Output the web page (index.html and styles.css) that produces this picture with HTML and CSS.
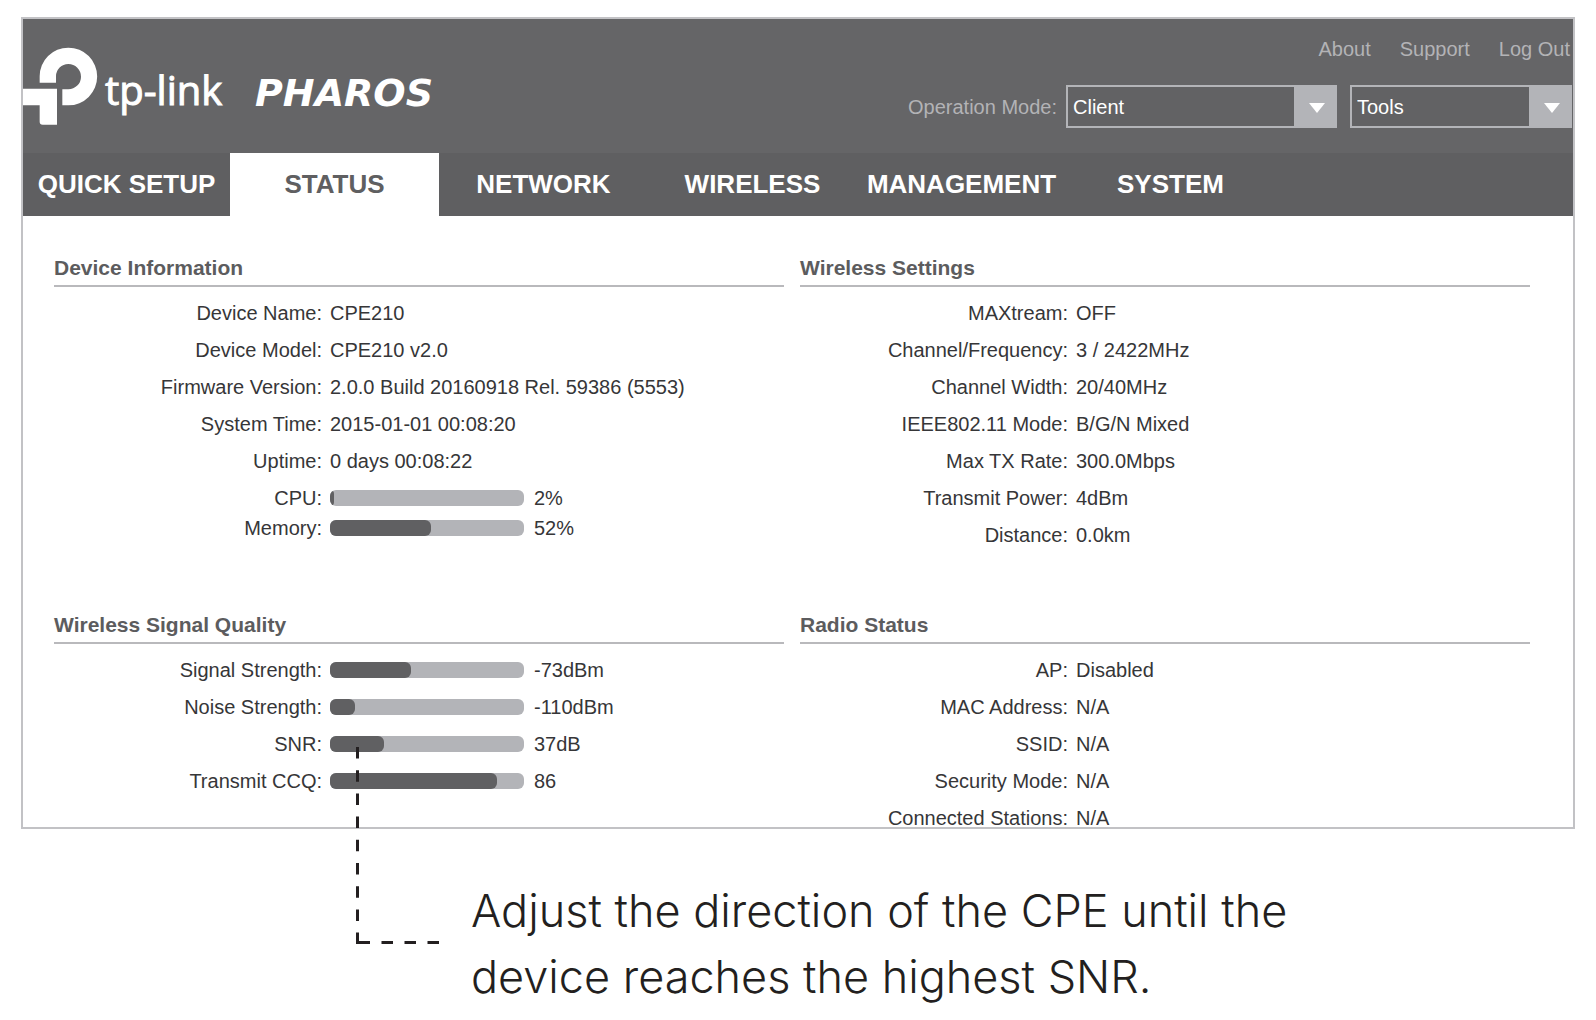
FILE: index.html
```html
<!DOCTYPE html>
<html lang="en">
<head>
<meta charset="utf-8">
<title>Pharos - Status</title>
<link rel="stylesheet" href="styles.css">
</head>
<body>
<div class="panel">
  <header class="header">
    <svg class="logo" width="430" height="134" viewBox="0 0 430 134" role="img" aria-label="tp-link Pharos">
      <g class="logo-mark" transform="translate(-23 -19) scale(.33333)">
        <path d="M119 248V229A86 86 0 0 1 205 143A86.500 86.500 0 0 1 205 316H187V268H205A38 38 0 0 0 205 192A37 37 0 0 0 168 229V248Z"/>
        <path d="M68 266H171V374H128Q119 374 119 365V316H68Z"/>
      </g>
      <text class="logo-name" x="82" y="86">tp-link</text>
      <text class="logo-product" x="232" y="87">PHAROS</text>
    </svg>
    <div class="tools">
      <nav class="links">
        <a href="#about">About</a>
        <a href="#support">Support</a>
        <a href="#logout">Log Out</a>
      </nav>
      <div class="controls">
        <label class="mode-label" for="mode">Operation Mode:</label>
        <div class="select select-mode">
          <select id="mode"><option>Client</option></select>
          <span class="arrow"><svg width="16" height="10" viewBox="0 0 16 10"><path d="M0 0H16L8 10Z"/></svg></span>
        </div>
        <div class="select select-tools">
          <select aria-label="Tools"><option>Tools</option></select>
          <span class="arrow"><svg width="16" height="10" viewBox="0 0 16 10"><path d="M0 0H16L8 10Z"/></svg></span>
        </div>
      </div>
    </div>
  </header>
  <nav class="tabs">
    <a href="#quick">QUICK SETUP</a>
    <a href="#status" class="active">STATUS</a>
    <a href="#network">NETWORK</a>
    <a href="#wireless">WIRELESS</a>
    <a href="#management">MANAGEMENT</a>
    <a href="#system">SYSTEM</a>
  </nav>
  <main class="content">
    <section>
      <h2>Device Information</h2>
      <dl>
        <div><dt>Device Name:</dt><dd>CPE210</dd></div>
        <div><dt>Device Model:</dt><dd>CPE210 v2.0</dd></div>
        <div><dt>Firmware Version:</dt><dd>2.0.0 Build 20160918 Rel. 59386 (5553)</dd></div>
        <div><dt>System Time:</dt><dd>2015-01-01 00:08:20</dd></div>
        <div><dt>Uptime:</dt><dd>0 days 00:08:22</dd></div>
        <div><dt>CPU:</dt><dd><span class="bar"><span class="fill" style="width:2%"></span></span>2%</dd></div>
        <div class="tight"><dt>Memory:</dt><dd><span class="bar"><span class="fill" style="width:52%"></span></span>52%</dd></div>
      </dl>
    </section>
    <section>
      <h2>Wireless Settings</h2>
      <dl>
        <div><dt>MAXtream:</dt><dd>OFF</dd></div>
        <div><dt>Channel/Frequency:</dt><dd>3 / 2422MHz</dd></div>
        <div><dt>Channel Width:</dt><dd>20/40MHz</dd></div>
        <div><dt>IEEE802.11 Mode:</dt><dd>B/G/N Mixed</dd></div>
        <div><dt>Max TX Rate:</dt><dd>300.0Mbps</dd></div>
        <div><dt>Transmit Power:</dt><dd>4dBm</dd></div>
        <div><dt>Distance:</dt><dd>0.0km</dd></div>
      </dl>
    </section>
    <section>
      <h2>Wireless Signal Quality</h2>
      <dl>
        <div><dt>Signal Strength:</dt><dd><span class="bar"><span class="fill" style="width:42%"></span></span>-73dBm</dd></div>
        <div><dt>Noise Strength:</dt><dd><span class="bar"><span class="fill" style="width:13%"></span></span>-110dBm</dd></div>
        <div><dt>SNR:</dt><dd><span class="bar"><span class="fill" style="width:28%"></span></span>37dB</dd></div>
        <div><dt>Transmit CCQ:</dt><dd><span class="bar"><span class="fill" style="width:86%"></span></span>86</dd></div>
      </dl>
    </section>
    <section>
      <h2>Radio Status</h2>
      <dl>
        <div><dt>AP:</dt><dd>Disabled</dd></div>
        <div><dt>MAC Address:</dt><dd>N/A</dd></div>
        <div><dt>SSID:</dt><dd>N/A</dd></div>
        <div><dt>Security Mode:</dt><dd>N/A</dd></div>
        <div><dt>Connected Stations:</dt><dd>N/A</dd></div>
      </dl>
    </section>
  </main>
</div>
<div class="callout">
  <svg class="leader" width="84" height="198" viewBox="0 0 84 198" aria-hidden="true">
    <path d="M1.500 0V197" stroke-dasharray="11.500 11.700"/>
    <path d="M0 195.500H83" stroke-dasharray="14 11.500 11.500 11.500 11.500 11.500 11.500"/>
  </svg>
  <p>Adjust the direction of the CPE until the<br>device reaches the highest SNR.</p>
</div>
</body>
</html>
```

FILE: styles.css
```css
* {
  box-sizing: border-box;
}

body {
  margin: 0;
  padding: 17px 21px 0;
  background: #fff;
  color: #363638;
  font: 20px/18px "Liberation Sans", Arial, sans-serif;
}

a {
  color: inherit;
  text-decoration: none;
}

.panel {
  border: 2px solid #c2c2c5;
}

/* Header */
.header {
  display: flex;
  justify-content: space-between;
  background: #656567;
}

.logo {
  display: block;
  fill: #fff;
}

.logo-name {
  font: 400 40px "Open Sans", sans-serif;
  stroke: #fff;
  stroke-width: 1;
}

.logo-product {
  font: italic bold 38px "DejaVu Sans", sans-serif;
}

.tools {
  display: flex;
  flex-direction: column;
  align-items: flex-end;
  gap: 27px;
  padding: 21px 1px 0 0;
  color: #b3b3b6;
}

.links {
  display: flex;
  gap: 29px;
  padding-right: 2px;
}

.controls {
  display: flex;
  align-items: center;
}

.mode-label {
  margin-right: 9px;
}

.select {
  position: relative;
  height: 43px;
}

.select-mode {
  width: 271px;
  margin-right: 13px;
}

.select-tools {
  width: 222px;
}

.select select {
  appearance: none;
  width: 100%;
  height: 100%;
  padding: 0 48px 0 5px;
  border: 2px solid #b3b4b8;
  border-radius: 0;
  background: #626264;
  color: #fff;
  font: inherit;
}

.arrow {
  position: absolute;
  top: 0;
  right: 0;
  bottom: 0;
  width: 43px;
  display: flex;
  align-items: center;
  justify-content: center;
  padding: 3px 0 0 2px;
  background: #b3b4b8;
  fill: #fff;
  pointer-events: none;
}

/* Tabs */
.tabs {
  display: flex;
  background: #5f5f61;
  color: #fff;
  font-size: 26px;
  font-weight: bold;
}

.tabs a {
  flex: 0 0 209px;
  line-height: 63px;
  text-align: center;
}

.tabs a:first-child {
  flex-basis: 207px;
}

.tabs .active {
  background: #fff;
  color: #5f5f61;
}

/* Status sections */
.content {
  display: grid;
  grid-template-columns: 1fr 1fr;
  gap: 69px 16px;
  padding: 40px 43px 0 31px;
}

h2 {
  margin: 0 0 17px;
  padding-bottom: 5px;
  border-bottom: 2px solid #b9b9bc;
  color: #5c5c5e;
  font-size: 21px;
  line-height: 24px;
}

dl {
  display: grid;
  gap: 19px;
  margin: 0;
}

dl div {
  display: grid;
  grid-template-columns: 268px 1fr;
  gap: 8px;
}

dl .tight {
  margin-top: -7px;
}

dt {
  text-align: right;
}

dd {
  display: flex;
  align-items: center;
  gap: 10px;
  margin: 0;
}

.bar {
  width: 194px;
  height: 16px;
  overflow: hidden;
  border-radius: 6px;
  background: #b3b4b8;
}

.fill {
  display: block;
  height: 100%;
  border-radius: 0 6px 6px 0;
  background: #606062;
}

/* Callout below the panel */
.callout {
  position: relative;
  padding: 49px 0 0 450px;
}

.leader {
  position: absolute;
  left: 335px;
  top: -82px;
  fill: none;
  stroke: #231f20;
  stroke-width: 3;
}

.callout p {
  margin: 0;
  color: #231f20;
  font: 300 45px/66px Inter, sans-serif;
}
```
